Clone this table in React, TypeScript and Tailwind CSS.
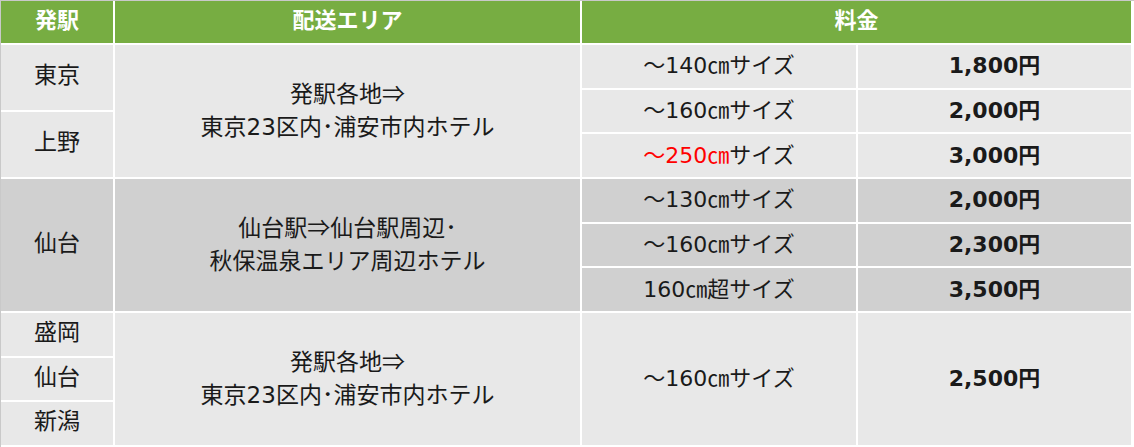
import React from "react";

const cols = "grid grid-cols-[112px_465px_274px_273px] gap-[2px]";

type SizeRow = { size: React.ReactNode; price: string };

function Cell({ children, className = "" }: { children: React.ReactNode; className?: string }) {
    return <div className={`flex items-center justify-center text-center ${className}`}>{children}</div>;
}

// the double arrow reads better in the CJK face than in DejaVu
const Arrow = () => <span className="font-['Noto_Sans_CJK_JP',sans-serif]">⇒</span>;

function Block({
    stations,
    area,
    rows,
    bg,
}: {
    stations: string[];
    area: React.ReactNode[];
    rows: SizeRow[];
    bg: string;
}) {
    return (
        <div className={`${cols} h-[132px]`}>
            {/* 発駅 */}
            <div className="flex flex-col gap-[2px]">
                {stations.map((s) => (
                    <Cell key={s} className={`flex-1 ${bg} pb-[4px] text-[23px]`}>{s}</Cell>
                ))}
            </div>

            {/* 配送エリア */}
            <Cell className={`${bg} flex-col text-[23px] leading-[33px] pb-[2px]`}>
                {area.map((a, i) => (
                    <span key={i}>{a}</span>
                ))}
            </Cell>

            {/* 料金 */}
            <div className="col-span-2 grid grid-cols-[274px_273px] gap-[2px]">
                {rows.map((r, i) => (
                    <React.Fragment key={i}>
                        <Cell className={`${bg} pb-[1px]`}>{r.size}</Cell>
                        <Cell className={`${bg} font-bold pb-[1px]`}>{r.price}</Cell>
                    </React.Fragment>
                ))}
            </div>
        </div>
    );
}

const tokyoArea = [
    <>発駅各地<Arrow /></>,
    <>東京23区内･浦安市内ホテル</>,
];

export default function App() {
    return (
        <div className="w-[1134px] h-[447px] bg-white border-t border-l border-[#c9c9c9] text-[22px] text-[#1a1a1a] font-['DejaVu_Sans','Noto_Sans_CJK_JP',sans-serif]">
            <div className="flex flex-col gap-[2px]">
                <div className={`${cols} h-[42px] text-white font-bold`}>
                    <Cell className="bg-[#77ad42] pb-[3px]">発駅</Cell>
                    <Cell className="bg-[#77ad42] pb-[3px]">配送エリア</Cell>
                    <Cell className="bg-[#77ad42] col-span-2 pb-[3px]">料金</Cell>
                </div>

                <Block
                    bg="bg-[#e8e8e8]"
                    stations={["東京", "上野"]}
                    area={tokyoArea}
                    rows={[
                        { size: "～140㎝サイズ", price: "1,800円" },
                        { size: "～160㎝サイズ", price: "2,000円" },
                        {
                            size: (
                                <>
                                    <span className="text-[#ff0000]">～250㎝</span>サイズ
                                </>
                            ),
                            price: "3,000円",
                        },
                    ]}
                />

                <Block
                    bg="bg-[#d0d0d0]"
                    stations={["仙台"]}
                    area={[
                        <>仙台駅<Arrow />仙台駅周辺･</>,
                        <>秋保温泉エリア周辺ホテル</>,
                    ]}
                    rows={[
                        { size: "～130㎝サイズ", price: "2,000円" },
                        { size: "～160㎝サイズ", price: "2,300円" },
                        { size: "160㎝超サイズ", price: "3,500円" },
                    ]}
                />

                <Block
                    bg="bg-[#e8e8e8]"
                    stations={["盛岡", "仙台", "新潟"]}
                    area={tokyoArea}
                    rows={[{ size: "～160㎝サイズ", price: "2,500円" }]}
                />
            </div>
        </div>
    );
}
